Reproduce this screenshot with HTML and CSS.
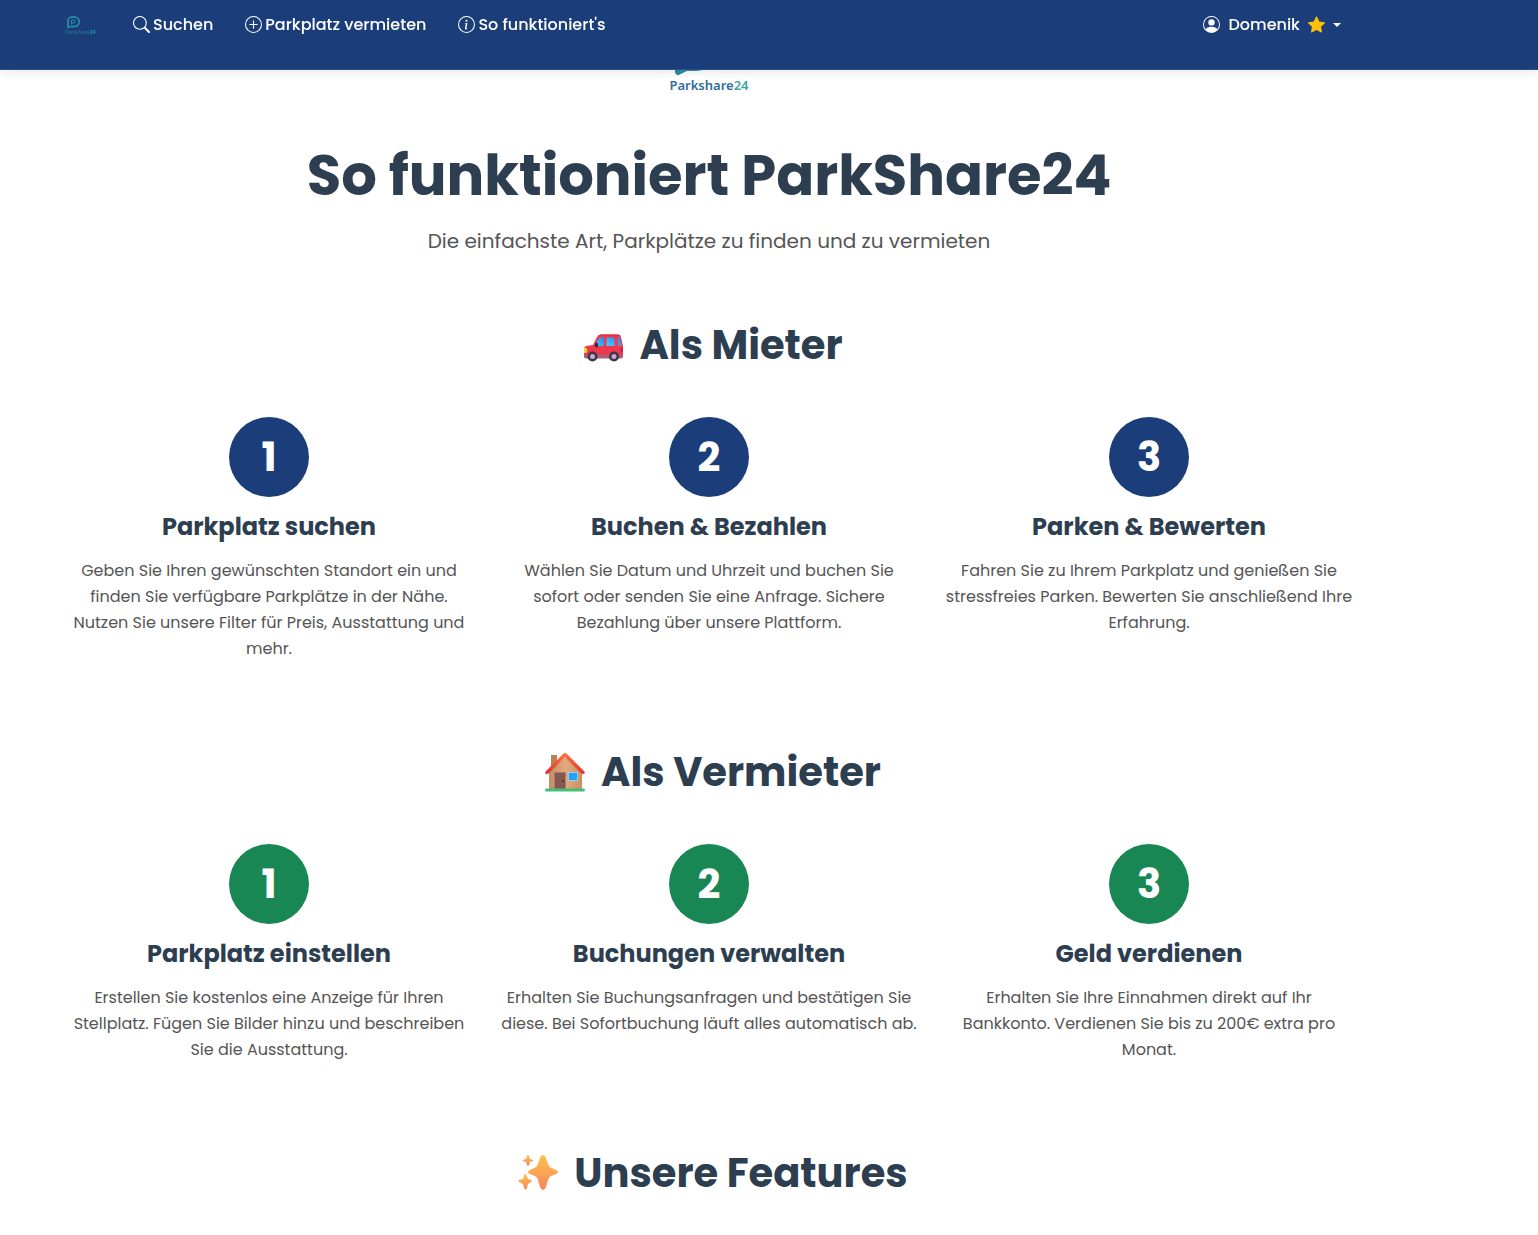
FILE: index.html
```html
<!DOCTYPE html>
<html lang="de">
<head>
<meta charset="utf-8">
<meta name="viewport" content="width=device-width, initial-scale=1">
<title>So funktioniert ParkShare24</title>
<link rel="stylesheet" href="styles.css">
</head>
<body>
<header class="navbar">
  <nav class="container nav-inner" aria-label="Hauptnavigation">
    <a class="brand" href="#" aria-label="Parkshare24">
      <svg width="34" height="20" viewBox="0 0 34 20">
        <path d="M3 12.500V6a4 4 0 0 1 4-4h2.500a4.500 4.500 0 0 1 0 9.500H5.500z" fill="none" stroke="#249aa8" stroke-width="1.500"/>
        <path d="M6.500 9.500V5h2.200a1.500 1.500 0 0 1 0 3H6.500" fill="none" stroke="#2590a6"/>
        <text x="0" y="19" class="brand-text">Parkshare<tspan class="brand-num">24</tspan></text>
      </svg>
    </a>
    <ul class="nav-links">
      <li><a href="#"><svg class="icon" viewBox="0 0 16 16"><path d="M11.742 10.344a6.500 6.500 0 1 0-1.397 1.398h-.001q.044.06.098.115l3.850 3.850a1 1 0 0 0 1.415-1.414l-3.850-3.850a1 1 0 0 0-.115-.1zM12 6.500a5.500 5.500 0 1 1-11 0 5.500 5.500 0 0 1 11 0"/></svg>Suchen</a></li>
      <li><a href="#"><svg class="icon" viewBox="0 0 16 16"><path d="M8 15A7 7 0 1 1 8 1a7 7 0 0 1 0 14m0 1A8 8 0 1 0 8 0a8 8 0 0 0 0 16"/><path d="M8 4a.5.5 0 0 1 .5.5v3h3a.5.5 0 0 1 0 1h-3v3a.5.5 0 0 1-1 0v-3h-3a.5.5 0 0 1 0-1h3v-3A.5.5 0 0 1 8 4"/></svg>Parkplatz vermieten</a></li>
      <li><a href="#"><svg class="icon" viewBox="0 0 16 16"><path d="M8 15A7 7 0 1 1 8 1a7 7 0 0 1 0 14m0 1A8 8 0 1 0 8 0a8 8 0 0 0 0 16"/><path d="m8.930 6.588-2.290.287-.082.38.45.083c.294.07.352.176.288.469l-.738 3.468c-.194.897.105 1.319.808 1.319.545 0 1.178-.252 1.465-.598l.088-.416c-.2.176-.492.246-.686.246-.275 0-.375-.193-.304-.533zM9 4.500a1 1 0 1 1-2 0 1 1 0 0 1 2 0"/></svg>So funktioniert's</a></li>
    </ul>
    <button class="user-menu" type="button" aria-haspopup="true">
      <svg class="icon" viewBox="0 0 16 16"><path d="M11 6a3 3 0 1 1-6 0 3 3 0 0 1 6 0"/><path fill-rule="evenodd" d="M0 8a8 8 0 1 1 16 0A8 8 0 0 1 0 8m8-7a7 7 0 0 0-5.468 11.370C3.242 11.226 4.805 10 8 10s4.757 1.225 5.468 2.370A7 7 0 0 0 8 1"/></svg>
      <span>Domenik</span>
      <svg class="icon star" viewBox="0 0 16 16"><path d="M3.612 15.443c-.386.198-.824-.149-.746-.592l.83-4.730L.173 6.765c-.329-.314-.158-.888.283-.95l4.898-.696L7.538.792c.197-.39.73-.39.927 0l2.184 4.327 4.898.696c.441.062.612.636.282.95l-3.522 3.356.83 4.730c.078.443-.36.79-.746.592L8 13.187l-4.389 2.256z"/></svg>
      <span class="caret"></span>
    </button>
  </nav>
</header>

<main class="container">
  <section class="hero">
    <div class="logo">
      <svg width="70" height="56" viewBox="0 0 70 56">
        <defs><linearGradient id="logo" x1="0" x2="1" y1="1" y2="0"><stop stop-color="#2f8ca3"/><stop offset="1" stop-color="#3aa9a9"/></linearGradient></defs>
        <path d="M9 50V22A15 15 0 0 1 24 6h3a18 18 0 0 1 0 40H17z" fill="none" stroke="url(#logo)" stroke-width="6" stroke-linejoin="round"/>
        <path d="M19 37V17h8a7 7 0 0 1 0 14h-8" fill="none" stroke="url(#logo)" stroke-width="5"/>
      </svg>
      <span class="logo-text">Parkshare<span>24</span></span>
    </div>
    <h1>So funktioniert ParkShare24</h1>
    <p class="lead">Die einfachste Art, Parkplätze zu finden und zu vermieten</p>
  </section>

  <section class="block">
    <h2>
      <svg class="emoji" viewBox="0 0 40 40">
        <defs>
          <linearGradient id="glass" x1="0" x2="1" y1="1" y2="0"><stop stop-color="#55c8ff"/><stop offset="1" stop-color="#1f86ec"/></linearGradient>
        </defs>
        <path d="M1 24q0-2 2-3l7-1 4-8q1-2.500 4-2.500h17q2.500 0 3 3L40 21v9q0 3-2 3H3q-2 0-2-3z" fill="#f0384c"/>
        <path d="M15 11q1-1.500 3-1.500h17q2 0 2.500 1.500z" fill="#dd3044"/>
        <path d="M16.500 12.500H21v8.500h-8.500q1-5 4-8.500z" fill="url(#glass)"/>
        <path d="M23.500 12.500H31l1 8.500h-8.500zM34.500 12.500H37l1.500 8.500h-3z" fill="url(#glass)"/>
        <path d="M1 29.500h39v2q0 2-2 2H3q-2 0-2-2z" fill="#a8607a"/>
        <path d="M1 23h2.500q1.500 2.500 0 5H1z" fill="#ffd52e"/>
        <rect x="37.500" y="23" width="2.500" height="4" rx="1" fill="#c61e59"/>
        <ellipse cx="13.500" cy="20" rx="1.700" ry="2.500" fill="#332b46"/>
        <g fill="#3f3547"><circle cx="9.500" cy="31.500" r="5"/><circle cx="31" cy="31.500" r="5"/></g>
        <g fill="#c4a9d6"><circle cx="9.500" cy="31.500" r="2.500"/><circle cx="31" cy="31.500" r="2.500"/></g>
      </svg>
      <span>Als Mieter</span>
    </h2>
    <div class="steps">
      <article class="step">
        <div class="number">1</div>
        <h3>Parkplatz suchen</h3>
        <p>Geben Sie Ihren gewünschten Standort ein und finden Sie verfügbare Parkplätze in der Nähe. Nutzen Sie unsere Filter für Preis, Ausstattung und mehr.</p>
      </article>
      <article class="step">
        <div class="number">2</div>
        <h3>Buchen &amp; Bezahlen</h3>
        <p>Wählen Sie Datum und Uhrzeit und buchen Sie sofort oder senden Sie eine Anfrage. Sichere Bezahlung über unsere Plattform.</p>
      </article>
      <article class="step">
        <div class="number">3</div>
        <h3>Parken &amp; Bewerten</h3>
        <p>Fahren Sie zu Ihrem Parkplatz und genießen Sie stressfreies Parken. Bewerten Sie anschließend Ihre Erfahrung.</p>
      </article>
    </div>
  </section>

  <section class="block host">
    <h2>
      <svg class="emoji" viewBox="0 0 40 40">
        <defs>
          <linearGradient id="wall" x1="0" x2="1"><stop stop-color="#c28d62"/><stop offset=".5" stop-color="#e3aa7c"/><stop offset="1" stop-color="#c98e65"/></linearGradient>
          <linearGradient id="roof" x1="0" x2="0" y1="0" y2="1"><stop stop-color="#ff7540"/><stop offset="1" stop-color="#d93235"/></linearGradient>
        </defs>
        <rect x="6" y="3" width="6" height="14" fill="#b88255"/>
        <path d="M4 20 20 5l17 15v18H4z" fill="url(#wall)"/>
        <path d="M20 1q1 0 2 1l17 17q2 3-1 3-1 0-2-1L20 5 4 21q-1 1-2 1-3 0-1-3L18 2q1-1 2-1" fill="url(#roof)"/>
        <rect x="9" y="20" width="12" height="17" rx="1" fill="#a47a72"/>
        <rect x="10" y="21" width="10" height="16" fill="#85574e"/>
        <circle cx="18" cy="29" r="1" fill="#4d302f"/>
        <rect x="23" y="20" width="10" height="9" fill="#86d5f8"/>
        <rect x="24" y="21" width="8" height="7" fill="#279ff2"/>
        <rect x="0" y="36.500" width="40" height="3" rx="1.500" fill="#42c178"/>
      </svg>
      <span>Als Vermieter</span>
    </h2>
    <div class="steps">
      <article class="step">
        <div class="number">1</div>
        <h3>Parkplatz einstellen</h3>
        <p>Erstellen Sie kostenlos eine Anzeige für Ihren Stellplatz. Fügen Sie Bilder hinzu und beschreiben Sie die Ausstattung.</p>
      </article>
      <article class="step">
        <div class="number">2</div>
        <h3>Buchungen verwalten</h3>
        <p>Erhalten Sie Buchungsanfragen und bestätigen Sie diese. Bei Sofortbuchung läuft alles automatisch ab.</p>
      </article>
      <article class="step">
        <div class="number">3</div>
        <h3>Geld verdienen</h3>
        <p>Erhalten Sie Ihre Einnahmen direkt auf Ihr Bankkonto. Verdienen Sie bis zu 200€ extra pro Monat.</p>
      </article>
    </div>
  </section>

  <section class="block">
    <h2>
      <svg class="emoji" viewBox="0 0 40 40">
        <defs><linearGradient id="spark" x1="0" x2="0" y1="0" y2="1"><stop stop-color="#fdc249"/><stop offset="1" stop-color="#fb8560"/></linearGradient></defs>
        <g fill="url(#spark)">
          <path d="M25 2q2 0 3 3l2 6q1 3 4 4l4 2q2 1 2 2t-2 2l-5 2q-2 1-3 4l-2 7q-1 3-3 3t-3-3l-2-7q-1-3-3-4l-5-2q-2-1-2-2t2-2l4-2q3-1 4-4l2-6q1-3 3-3"/>
          <path d="M10 2q1 0 1 1l1 3 3 1q1 1 0 1l-3 1-1 3q-1 2-2 0l-1-3-3-1q-1 0 0-1l3-1 1-3q0-1 1-1"/>
          <path d="M7 21q1 0 2 2l1 3 3 1q2 1 0 2l-3 2-1 4q-1 3-3 0l-1-4-4-2q-1-1 0-2l4-1 1-3q0-2 1-2"/>
        </g>
      </svg>
      <span>Unsere Features</span>
    </h2>
  </section>
</main>
</body>
</html>
```
FILE: styles.css
```css
* { box-sizing: border-box; }

body {
  margin: 0;
  padding-right: 120px;
  background: #fff;
  color: #2c3e50;
  font-family: Poppins, Inter, "Open Sans", sans-serif;
  font-size: 16px;
  line-height: 26px;
}

.container {
  width: 100%;
  max-width: 1320px;
  margin: 0 auto;
  padding: 0 12px;
}

.navbar {
  position: fixed;
  top: 0;
  left: 0;
  right: 0;
  z-index: 10;
  height: 70px;
  padding-right: 120px;
  background: #1b3d7a;
  border-bottom: 1px solid #2f4f8a;
  box-shadow: 0 2px 10px rgba(0, 0, 0, .1);
}

.nav-inner {
  display: flex;
  align-items: center;
  height: 49px;
}

.brand {
  display: flex;
  margin: 0 34px 0 4px;
}

.brand-text {
  font: 600 5px "Noto Sans", sans-serif;
  fill: #27708f;
}

.brand-num { fill: #25a6b0; }

.nav-links {
  display: flex;
  gap: 32px;
  margin: 0;
  padding: 0;
  list-style: none;
}

.nav-links a,
.user-menu {
  display: flex;
  align-items: center;
  color: #fff;
  font-family: inherit;
  font-size: 16px;
  font-weight: 500;
  line-height: 26px;
  text-decoration: none;
}

.nav-links a { gap: 3px; }

.user-menu {
  gap: 8px;
  margin-left: auto;
  padding: 0 16px;
  background: none;
  border: 0;
}

.icon {
  flex: none;
  width: 17px;
  height: 17px;
  fill: currentColor;
}

.star { color: #ffc107; }

.caret {
  border: 4px solid transparent;
  border-top-color: #fff;
  border-bottom: 0;
}

.hero {
  padding-top: 22px;
  text-align: center;
}

.logo {
  display: inline-flex;
  flex-direction: column;
  align-items: flex-start;
  height: 72px;
}

.logo svg { flex: none; }

.logo-text {
  color: #2e6d9a;
  font-family: "Noto Sans", sans-serif;
  font-size: 13px;
  font-weight: 600;
  line-height: 14px;
}

.logo-text span { color: #3aa5a8; }

h1 {
  margin: 48px 0 16px;
  font-size: 56px;
  font-weight: 700;
  line-height: 67px;
}

.lead {
  margin: 0 0 64px;
  color: #555;
  font-size: 20px;
  line-height: 32px;
}

.block { margin-bottom: 86px; }

h2 {
  display: flex;
  justify-content: center;
  align-items: center;
  gap: 16px;
  margin: 0 0 48px;
  padding-left: 8px;
  font-size: 40px;
  font-weight: 700;
  line-height: 48px;
}

.emoji {
  width: 40px;
  height: 40px;
}

.steps {
  display: grid;
  grid-template-columns: repeat(3, 1fr);
  gap: 24px;
}

.step { text-align: center; }

.number {
  display: grid;
  place-items: center;
  width: 80px;
  height: 80px;
  margin: 0 auto 16px;
  border-radius: 50%;
  background: #1b3d7a;
  color: #fff;
  font-size: 40px;
  font-weight: 700;
}

.host .number { background: #198754; }

h3 {
  margin: 0 0 16px;
  font-size: 24px;
  font-weight: 700;
  line-height: 28px;
}

.step p {
  margin: 0;
  padding-top: 1px;
  color: #555;
}
```
